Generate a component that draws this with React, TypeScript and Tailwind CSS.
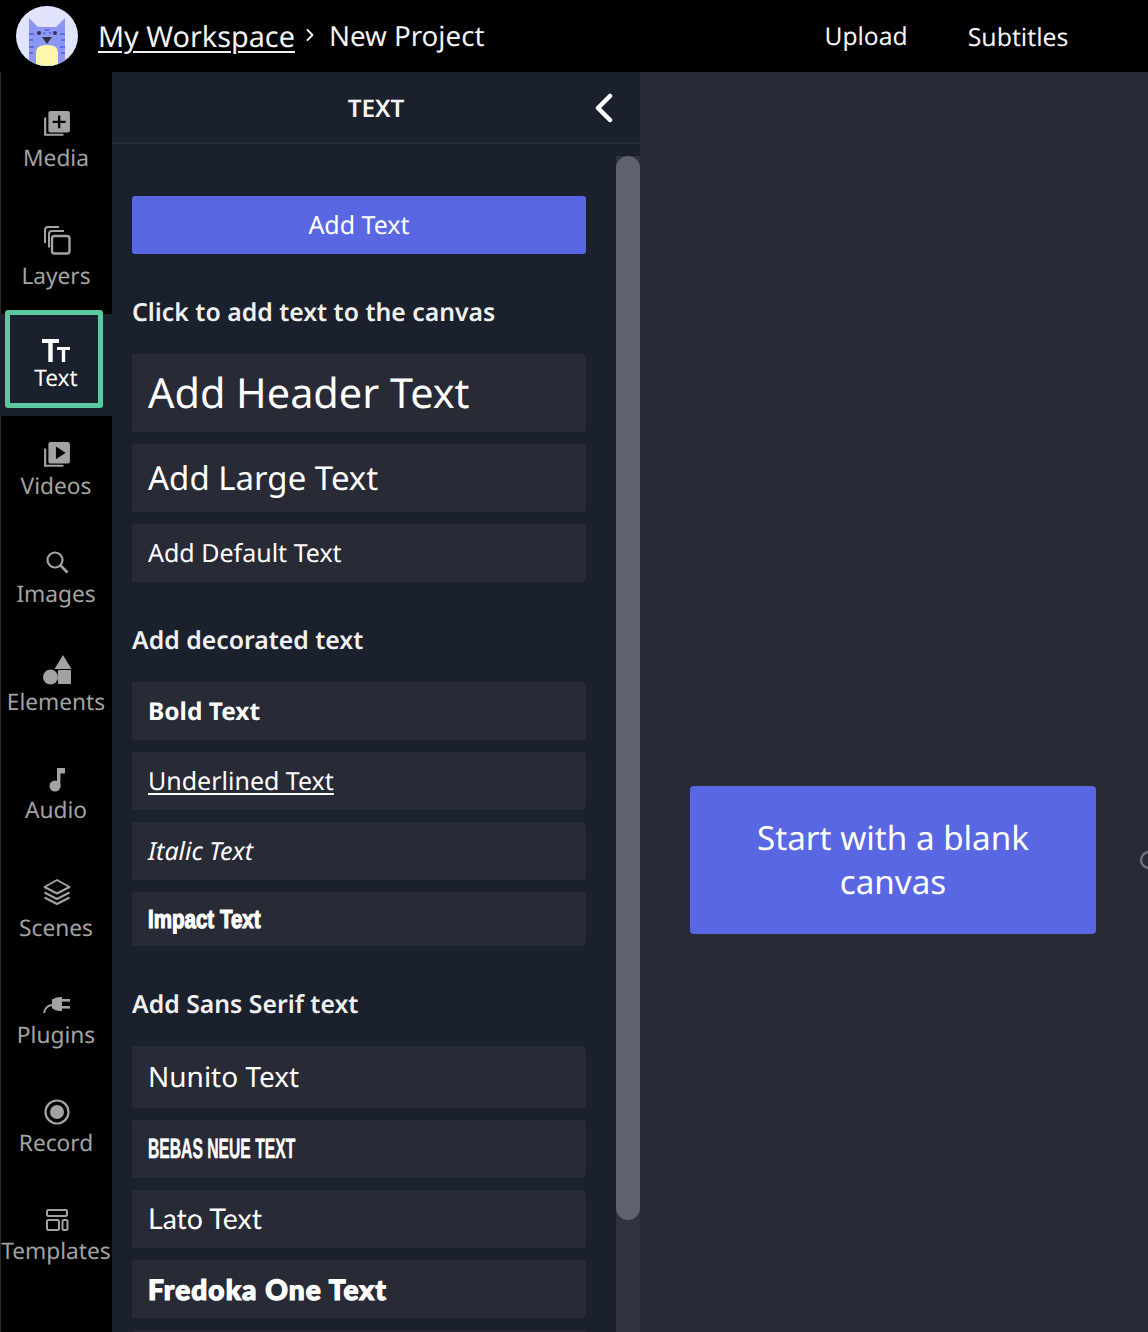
import React from "react";
import { ChevronRight } from "lucide-react";

const Stack = ({ children }: { children: React.ReactNode }) => (
  <svg width="28" height="28" viewBox="0 0 26 26" fill="none">
    <path d="M2 7v16h17" stroke="#a3a3a3" strokeWidth="2" fill="none" />
    {children}
  </svg>
);

const icons: Record<string, React.ReactNode> = {
  Media: (
    <Stack>
      <rect x="5" y="1" width="20" height="20" rx="2" fill="#a3a3a3" />
      <path d="M15 5v12M9 11h12" stroke="#000" strokeWidth="2.200" />
    </Stack>
  ),
  Layers: (
    <svg width="30" height="30" viewBox="0 0 30 30" fill="none" stroke="#a3a3a3" strokeWidth="2">
      <rect x="10" y="10" width="17.500" height="17.500" rx="2.500" strokeWidth="2.400" />
      <path d="M7 21.500V8a3 3 0 0 1 3-3h12" />
      <path d="M3 17V4A3 3 0 0 1 6 1h11" />
    </svg>
  ),
  Videos: (
    <Stack>
      <rect x="5" y="1" width="20" height="20" rx="2" fill="#a3a3a3" />
      <path d="M12 5l9 6-9 6z" fill="#000" />
    </Stack>
  ),
  Images: (
    <svg width="26" height="26" viewBox="0 0 26 26" fill="none" stroke="#a3a3a3" strokeWidth="2.200">
      <circle cx="11" cy="11" r="7.500" />
      <path d="M16.500 16.500l7 7" strokeWidth="2.600" />
    </svg>
  ),
  Elements: (
    <svg width="32" height="32" viewBox="0 0 32 32" fill="#a3a3a3">
      <path d="M22 1l8.500 14h-17z" />
      <circle cx="9.500" cy="23" r="7.500" />
      <rect x="17" y="16" width="13" height="14" rx="1" />
    </svg>
  ),
  Audio: (
    <svg width="26" height="28" viewBox="0 0 26 28" fill="#a3a3a3">
      <rect x="13" y="2" width="3.400" height="19" />
      <rect x="13" y="2" width="8" height="5.500" />
      <circle cx="11" cy="20" r="5.500" />
    </svg>
  ),
  Scenes: (
    <svg width="30" height="28" viewBox="0 0 30 28" fill="none" stroke="#a3a3a3" strokeWidth="2" strokeLinejoin="round">
      <path d="M15 2l12.500 7L15 15.500 2.500 9z" />
      <path d="M2.500 14.500L15 21l12.500-6.500" />
      <path d="M2.500 19.500L15 26l12.500-6.500" />
    </svg>
  ),
  Plugins: (
    <svg width="30" height="20" viewBox="0 0 30 20" fill="#a3a3a3">
      <path d="M10 4.500C13 3 15 2 18 2h2v14h-2c-3 0-6-1-8-3z" />
      <rect x="20" y="4" width="8" height="2.600" />
      <rect x="20" y="11" width="8" height="2.600" />
      <path d="M11 10C6 10 3 13 2 18" stroke="#a3a3a3" strokeWidth="1.800" fill="none" />
    </svg>
  ),
  Record: (
    <svg width="28" height="28" viewBox="0 0 28 28">
      <circle cx="14" cy="14" r="11.500" fill="none" stroke="#a3a3a3" strokeWidth="2.200" />
      <circle cx="14" cy="14" r="7" fill="#a3a3a3" />
    </svg>
  ),
  Templates: (
    <svg width="26" height="26" viewBox="0 0 26 26" fill="none" stroke="#a3a3a3" strokeWidth="2">
      <rect x="3" y="3" width="20" height="6" rx="1.500" />
      <rect x="3" y="13" width="12" height="10" rx="1.500" />
      <rect x="18.500" y="13" width="5" height="10" rx="1.500" />
    </svg>
  ),
};

const items = [
  { label: "Media", cls: "mt-[36px]", gap: "mt-[6px]" },
  { label: "Layers", cls: "mt-[55px]", gap: "mt-[7px]" },
  { label: "Videos", cls: "mt-[23px]", gap: "mt-[3px]" },
  { label: "Images", cls: "mt-[48px]", gap: "mt-[4px]" },
  { label: "Elements", cls: "mt-[48px]", gap: "mt-[4px]" },
  { label: "Audio", cls: "mt-[50px]", gap: "mt-[2px]" },
  { label: "Scenes", cls: "mt-[54px]", gap: "mt-[8px]" },
  { label: "Plugins", cls: "mt-[49px]", gap: "mt-[2px]" },
  { label: "Record", cls: "mt-[49px]", gap: "mt-[3px]" },
  { label: "Templates", cls: "mt-[49px]", gap: "mt-[3px]" },
];

const NavItem = ({ label, cls, gap }: { label: string; cls: string; gap: string }) => (
  <div className={`flex flex-col items-center ${cls}`}>
    <div className="h-[32px] flex items-center justify-center pl-px">{icons[label]}</div>
    <div className={`h-[24px] leading-[24px] text-[22.700px] text-[#a3a3a3] whitespace-nowrap ${gap}`}>{label}</div>
  </div>
);

const ActiveText = () => (
  <div className="relative mt-[26px] h-[102px] bg-[#1a202c] flex flex-col items-center pt-[20px]">
    <div className="absolute left-[5px] top-[-4px] w-[98px] h-[98px] border-[5px] border-[#5bc8a0] rounded-[3px]" />
    <div className="h-[32px] w-[112px] flex items-center justify-center">
      <svg width="32" height="28" viewBox="0 0 32 28" fill="#fff">
        <path d="M2 3h17v4h-6.300v19H8.300V7H2z" />
        <path d="M17 11h13v3h-4.800v12h-3.400V14H17z" />
      </svg>
    </div>
    <div className="h-[24px] leading-[24px] text-[22.700px] text-white">Text</div>
  </div>
);

const Label = ({ children, cls }: { children: React.ReactNode; cls: string }) => (
  <div className={`text-[24.800px] leading-[32px] font-semibold text-[#f0f0f0] ${cls}`}>{children}</div>
);

const Row = ({ children, cls, mt = "mt-3" }: { children: React.ReactNode; cls: string; mt?: string }) => (
  <div className={`bg-[#282a36] rounded-[3px] flex items-center pl-4 text-white whitespace-nowrap ${mt} ${cls}`}>{children}</div>
);

const Avatar = () => (
  <svg width="62" height="60" viewBox="0 0 62 60" className="shrink-0">
    <defs>
      <clipPath id="c">
        <ellipse cx="31" cy="30" rx="31" ry="30" />
      </clipPath>
    </defs>
    <g clipPath="url(#c)">
      <rect width="62" height="60" fill="#e2e4ff" />
      <path d="M13 12l9 9h18l9-9v48H13z" fill="#8c97f3" />
      <path d="M13 28h5M13 34h4M13 41h5M13 47h4M49 28h-5M49 34h-4M49 41h-5M49 47h-4M29 24h4M27 27h2M33 27h2" stroke="#5d6be8" strokeWidth="2" />
      <circle cx="23" cy="27" r="2" fill="#33354a" />
      <circle cx="39" cy="27" r="2" fill="#33354a" />
      <path d="M26 31h10l-5 7z" fill="#2f3142" />
      <path d="M20 60V47c0-6 4-8 11-8s11 2 11 8v13z" fill="#fdf6ac" />
    </g>
  </svg>
);

export default function App() {
  const sans = { fontFamily: '"Noto Sans", sans-serif' };
  return (
    <div className="w-[1148px] h-[1332px] overflow-hidden flex flex-col bg-black relative [text-rendering:geometricPrecision]" style={sans}>
      <header className="h-[72px] shrink-0 bg-black flex items-center pl-[16px] text-white">
        <Avatar />
        <a className="ml-[20px] text-[28.800px] leading-[36px] underline underline-offset-[4px] decoration-2 text-[#f2f2f2] mt-[2px]">My Workspace</a>
        <ChevronRight size={20} strokeWidth={2.2} className="ml-[5px] -mt-[2px] text-[#f2f2f2]" />
        <span className="ml-[9px] text-[27.700px] leading-[36px] text-[#f2f2f2]">New Project</span>
        <span className="ml-[340px] text-[24.600px] leading-[32px] text-[#f2f2f2] mt-[2px]">Upload</span>
        <span className="ml-[60px] text-[24.800px] leading-[32px] text-[#f2f2f2] mt-[2px]">Subtitles</span>
      </header>

      <div className="flex-1 flex min-h-0">
        <nav className="w-[112px] shrink-0 bg-black shadow-[inset_1px_0_0_#2b2b2b] overflow-hidden">
          {items.slice(0, 2).map((i) => <NavItem key={i.label} {...i} />)}
          <ActiveText />
          {items.slice(2).map((i) => <NavItem key={i.label} {...i} />)}
        </nav>

        <aside className="w-[528px] shrink-0 bg-[#1a202c] flex flex-col min-h-0">
          <div className="h-[72px] shrink-0 border-b-2 border-b-[#282a36] relative flex items-center justify-center">
            <span className="text-[24.300px] font-semibold text-[#f5f5f5] mt-[5px]">TEXT</span>
            <svg width="20" height="32" viewBox="0 0 20 32" fill="none" className="absolute left-[482px] top-[21px]">
              <path d="M16 3L4 15l12 12" stroke="#fff" strokeWidth="4.500" strokeLinecap="round" strokeLinejoin="round" />
            </svg>
          </div>
          <div className="flex-1 flex min-h-0 overflow-hidden">
            <div className="w-[504px] shrink-0 pl-5 pr-[30px] pt-[52px]">
              <div className="h-[58px] bg-[#5968e2] rounded-[3px] flex items-center justify-center text-[25px] text-white pt-px">Add Text</div>
              <Label cls="mt-[42px]">Click to add text to the canvas</Label>
              <Row cls="h-[78px] text-[41.400px] mt-[26px]" mt="">Add Header Text</Row>
              <Row cls="h-[68px] text-[33px]">Add Large Text</Row>
              <Row cls="h-[58px] text-[25px] pt-px">Add Default Text</Row>
              <Label cls="mt-[42px]">Add decorated text</Label>
              <Row cls="h-[58px] text-[24.500px] font-bold pt-[2px]" mt="mt-[26px]">Bold Text</Row>
              <Row cls="h-[58px] text-[25px] pt-px"><span className="underline underline-offset-[3px]">Underlined Text</span></Row>
              <Row cls="h-[58px] text-[25px] italic pt-px">Italic Text</Row>
              <Row cls="h-[54px] text-[26px]">
                <span className="font-['Liberation_Sans',sans-serif] font-bold origin-left scale-x-[0.79] inline-block [-webkit-text-stroke:1.200px_white]">Impact Text</span>
              </Row>
              <Label cls="mt-[42px]">Add Sans Serif text</Label>
              <Row cls="h-[62px] text-[28px] pb-px" mt="mt-[26px]">Nunito Text</Row>
              <Row cls="h-[58px] text-[28px]">
                <span className="font-['Liberation_Sans',sans-serif] font-bold origin-left scale-x-[0.56] inline-block [-webkit-text-stroke:0.5px_white]">BEBAS NEUE TEXT</span>
              </Row>
              <Row cls="h-[58px] text-[28.500px] pt-px"><span className="font-['Lato',sans-serif]">Lato Text</span></Row>
              <Row cls="h-[58px] text-[28px]">
                <span className="font-['Lato',sans-serif] font-black tracking-[1.100px] [-webkit-text-stroke:1.200px_white]">Fredoka One Text</span>
              </Row>
              <Row cls="h-[58px]">{""}</Row>
            </div>
            <div className="w-[24px] shrink-0 mt-[12px] bg-[#2f3340]">
              <div className="h-[1064px] rounded-[12px] bg-[#5f616e]" />
            </div>
          </div>
        </aside>

        <main className="flex-1 bg-[#282a36] relative flex items-start pl-[50px] pt-[714px] min-w-0 overflow-hidden">
          <div className="w-[406px] h-[148px] bg-[#5968e2] rounded-[4px] flex items-center justify-center text-center text-[33.200px] leading-[44px] text-white">
            Start with a blank<br />canvas
          </div>
          <svg width="20" height="24" viewBox="0 0 20 24" fill="none" className="absolute left-[499px] top-[776px]">
            <circle cx="10" cy="12" r="8" stroke="#6b6d7a" strokeWidth="2.500" />
          </svg>
        </main>
      </div>
    </div>
  );
}
